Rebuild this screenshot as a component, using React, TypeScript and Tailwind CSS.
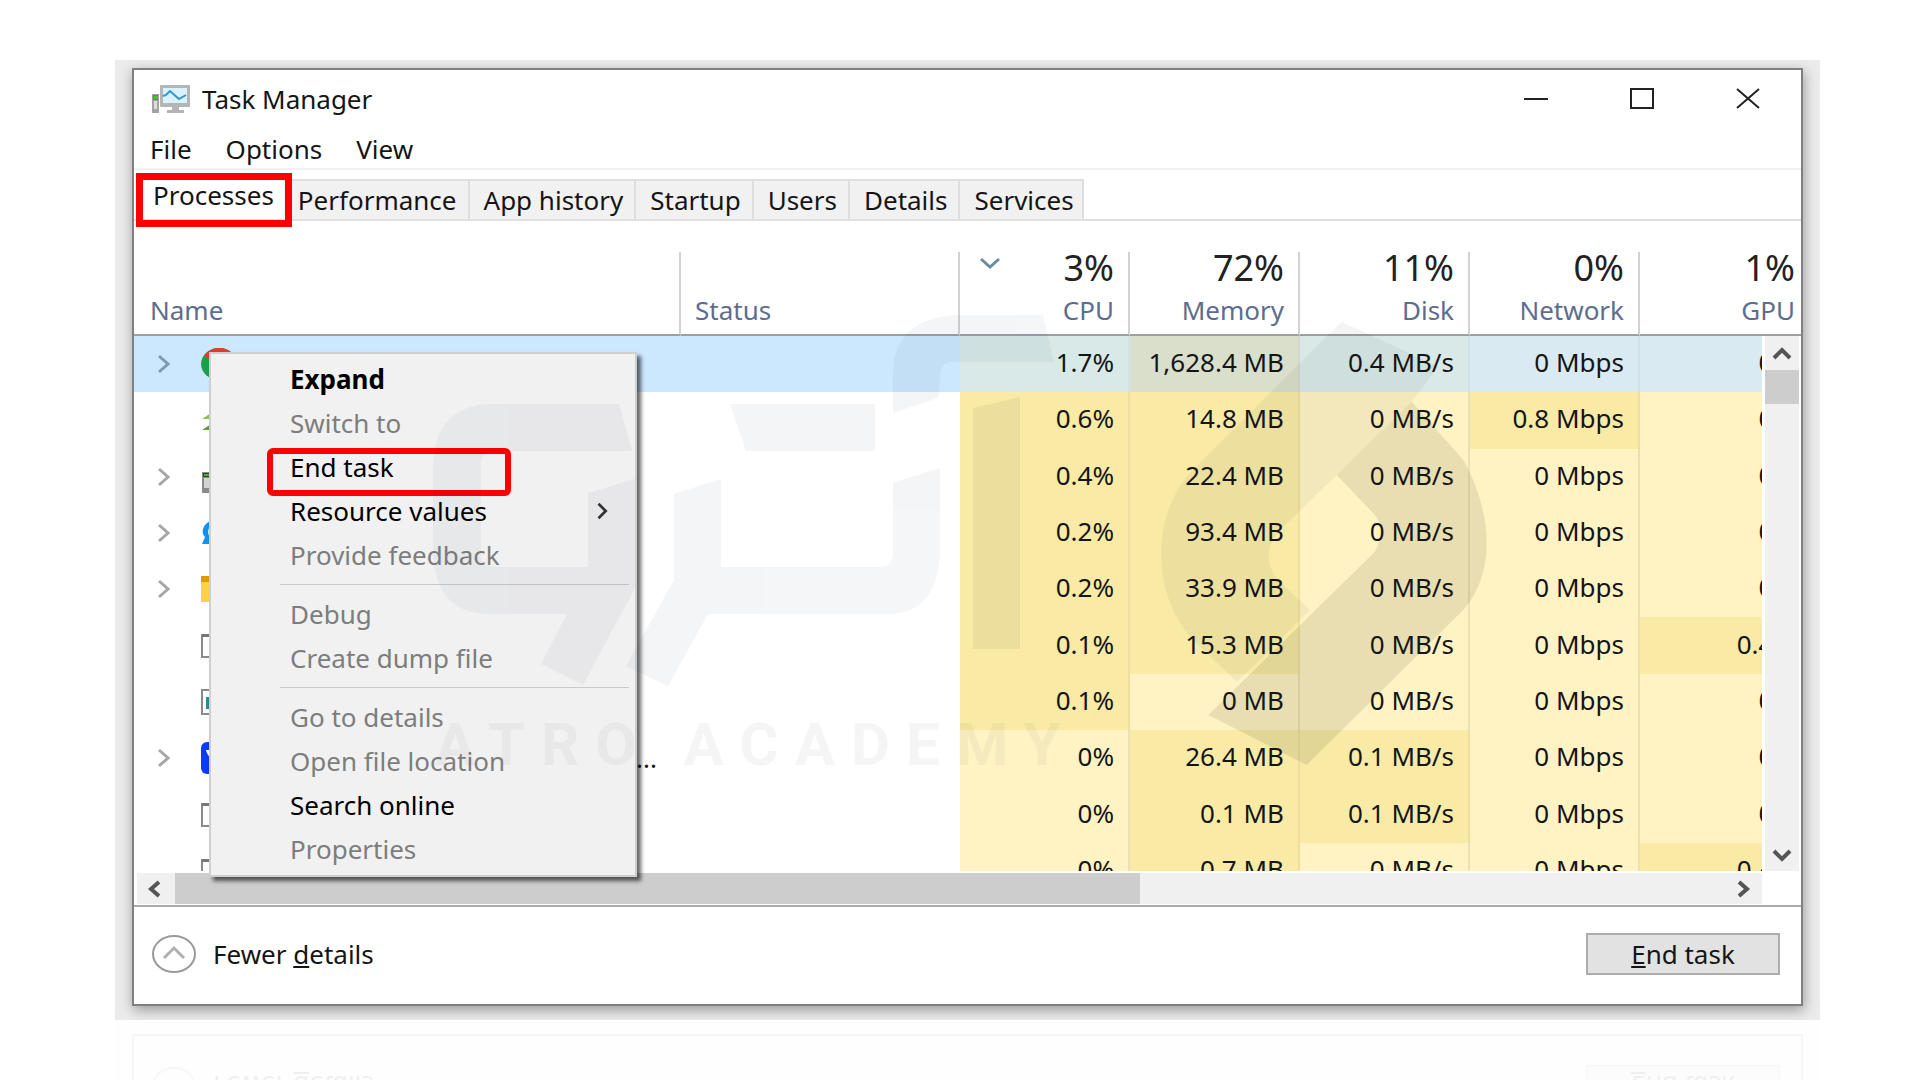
import React from 'react';
import clsx from 'clsx';

type Heat = 'low' | 'high';

interface ProcessRow {
  icon: IconName;
  expandable?: boolean;
  truncated?: boolean;
  values: [string, Heat][];
}

type IconName = 'chrome' | 'arrows' | 'tower' | 'swirl' | 'folder' | 'window' | 'app' | 'shield';

const TABS = ['Processes', 'Performance', 'App history', 'Startup', 'Users', 'Details', 'Services'];

const COLUMNS = [
  { label: 'CPU', usage: '3%', sorted: true },
  { label: 'Memory', usage: '72%' },
  { label: 'Disk', usage: '11%' },
  { label: 'Network', usage: '0%' },
  { label: 'GPU', usage: '1%' },
];

const ROWS: ProcessRow[] = [
  { icon: 'chrome', expandable: true, values: [['1.7%', 'low'], ['1,628.4 MB', 'high'], ['0.4 MB/s', 'low'], ['0 Mbps', 'low'], ['0%', 'low']] },
  { icon: 'arrows', values: [['0.6%', 'high'], ['14.8 MB', 'high'], ['0 MB/s', 'low'], ['0.8 Mbps', 'high'], ['0%', 'low']] },
  { icon: 'tower', expandable: true, values: [['0.4%', 'high'], ['22.4 MB', 'high'], ['0 MB/s', 'low'], ['0 Mbps', 'low'], ['0%', 'low']] },
  { icon: 'swirl', expandable: true, values: [['0.2%', 'high'], ['93.4 MB', 'high'], ['0 MB/s', 'low'], ['0 Mbps', 'low'], ['0%', 'low']] },
  { icon: 'folder', expandable: true, values: [['0.2%', 'high'], ['33.9 MB', 'high'], ['0 MB/s', 'low'], ['0 Mbps', 'low'], ['0%', 'low']] },
  { icon: 'window', values: [['0.1%', 'high'], ['15.3 MB', 'high'], ['0 MB/s', 'low'], ['0 Mbps', 'low'], ['0.4%', 'high']] },
  { icon: 'app', values: [['0.1%', 'high'], ['0 MB', 'low'], ['0 MB/s', 'low'], ['0 Mbps', 'low'], ['0%', 'low']] },
  { icon: 'shield', expandable: true, truncated: true, values: [['0%', 'low'], ['26.4 MB', 'high'], ['0.1 MB/s', 'high'], ['0 Mbps', 'low'], ['0%', 'low']] },
  { icon: 'window', values: [['0%', 'low'], ['0.1 MB', 'high'], ['0.1 MB/s', 'high'], ['0 Mbps', 'low'], ['0%', 'low']] },
  { icon: 'window', values: [['0%', 'low'], ['0.7 MB', 'high'], ['0 MB/s', 'low'], ['0 Mbps', 'low'], ['0.4%', 'high']] },
];

const MENU_GROUPS = [
  [
    { label: 'Expand', primary: true },
    { label: 'Switch to', disabled: true },
    { label: 'End task', marked: true },
    { label: 'Resource values', submenu: true },
    { label: 'Provide feedback', disabled: true },
  ],
  [
    { label: 'Debug', disabled: true },
    { label: 'Create dump file', disabled: true },
  ],
  [
    { label: 'Go to details', disabled: true },
    { label: 'Open file location', disabled: true },
    { label: 'Search online' },
    { label: 'Properties', disabled: true },
  ],
] as { label: string; primary?: boolean; disabled?: boolean; marked?: boolean; submenu?: boolean }[][];

const Chevron: React.FC<{ points: string; className: string; stroke?: number }> = ({ points, className, stroke = 3 }) => (
  <svg viewBox="0 0 20 20" className={className} fill="none" stroke="currentColor" strokeWidth={stroke} aria-hidden="true">
    <polyline points={points} />
  </svg>
);

const ProcessIcon: React.FC<{ name: IconName }> = ({ name }) => (
  <svg viewBox="0 0 36 32" className="h-8 w-9 shrink-0" aria-hidden="true">
    {name === 'chrome' && (
      <>
        <ellipse cx="18" cy="16" rx="18" ry="16" fill="#1e9e49" />
        <path d="M3 8C10-3 28-3 34 9L18 12L7 10Z" fill="#e33b2e" />
        <circle cx="18" cy="16" r="7" fill="#4285f4" />
      </>
    )}
    {name === 'arrows' && (
      <>
        <path d="M1 15L13 7V15Z" fill="#8cc152" />
        <path d="M1 26L13 18V26Z" fill="#5f9e38" />
      </>
    )}
    {name === 'tower' && (
      <>
        <rect x="1" y="11" width="12" height="21" fill="#8b8b8b" />
        <rect x="2" y="12" width="9" height="4" fill="#3c3c3c" />
        <rect x="3" y="13" width="8" height="2" fill="#39c016" />
        <rect x="3" y="17" width="8" height="10" fill="#d3d3d3" />
      </>
    )}
    {name === 'swirl' && <path d="M14 3C2 4-1 16 4 20L1 27H14L11 22C5 18 6 9 14 7Z" fill="#1292ee" />}
    {name === 'folder' && (
      <>
        <rect x="0" y="3" width="30" height="26" fill="#ffd04a" />
        <rect x="0" y="3" width="14" height="6" fill="#dd9a0b" />
      </>
    )}
    {name === 'window' && (
      <>
        <rect x="1" y="5" width="30" height="22" fill="#fff" stroke="#8a8a8a" strokeWidth="2" />
        <rect x="1" y="4" width="30" height="3" fill="#777" />
      </>
    )}
    {name === 'app' && (
      <>
        <rect x="1" y="4" width="28" height="24" fill="#fff" stroke="#8a8a8a" strokeWidth="2" />
        <rect x="5" y="11" width="16" height="12" fill="#2a8b99" />
      </>
    )}
    {name === 'shield' && (
      <>
        <rect width="34" height="32" rx="6" fill="#0b3bff" />
        <path d="M5 8H14V18Q6 15 5 8Z" fill="#fff" />
      </>
    )}
  </svg>
);

const TaskManagerLogo: React.FC = () => (
  <svg viewBox="0 0 38 28" className="h-7 w-[38px]" aria-hidden="true">
    <rect x="0" y="9" width="7" height="19" fill="#a3a3a3" />
    <rect x="1" y="10" width="5" height="5" fill="#777" />
    <rect x="2" y="11" width="4" height="3" fill="#3ccb1c" />
    <rect x="2" y="16" width="3" height="8" fill="#ddd" />
    <rect x="8" y="0" width="30" height="22" rx="1" fill="#b5b5b5" />
    <rect x="11" y="3" width="24" height="15" fill="#d9f2fd" />
    <path d="M11 11L14 10L18 6L27 14L34 10" fill="none" stroke="#2f97d5" strokeWidth="2" />
    <path d="M20 22H27V25H32V28H15V25H20Z" fill="#b4b4b4" />
  </svg>
);

const TitleBar: React.FC = () => (
  <header className="flex h-[58px] items-center justify-between pl-[18px] pr-10">
    <div className="flex items-center gap-3">
      <TaskManagerLogo />
      <h1>Task Manager</h1>
    </div>
    <div className="flex items-center gap-20 text-[#222]">
      <button type="button" aria-label="Minimize">
        <svg viewBox="0 0 26 22" className="h-[22px] w-[26px]" stroke="currentColor" strokeWidth="2">
          <path d="M1 11H25" />
        </svg>
      </button>
      <button type="button" aria-label="Maximize">
        <svg viewBox="0 0 26 22" className="h-[22px] w-[26px]" fill="none" stroke="currentColor" strokeWidth="2">
          <rect x="2" y="1" width="22" height="19" />
        </svg>
      </button>
      <button type="button" aria-label="Close">
        <svg viewBox="0 0 26 22" className="h-[22px] w-[26px]" stroke="currentColor" strokeWidth="2">
          <path d="M2 1L24 20M24 1L2 20" />
        </svg>
      </button>
    </div>
  </header>
);

const Tabs: React.FC = () => (
  <div role="tablist" className="flex h-[51px] items-end border-b-2 border-[#e0e0e0] pl-0.5">
    {TABS.map((tab, i) =>
      i === 0 ? (
        <button key={tab} type="button" role="tab" aria-selected="true" className="relative h-10 bg-white pb-2 pl-[17px] pr-2.5">
          {tab}
          <span className="absolute -bottom-2 -right-2 -top-1.5 left-0 z-10 border-[7px] border-[#fe0000]" />
        </button>
      ) : (
        <button
          key={tab}
          type="button"
          role="tab"
          aria-selected="false"
          className="h-10 border-r-2 border-t-2 border-[#dedede] bg-[#f1f1f1] pl-3.5 pr-[11px] last:pr-2"
        >
          {tab}
        </button>
      ),
    )}
  </div>
);

const ProcessTable: React.FC = () => (
  <table className="h-[647px] w-full table-fixed border-separate border-spacing-0">
    <colgroup>
      <col />
      <col className="w-[279px]" />
      <col className="w-[170px]" />
      <col className="w-[170px]" />
      <col className="w-[170px]" />
      <col className="w-[170px]" />
      <col className="w-[161px]" />
    </colgroup>
    <thead>
      <tr className="h-[84px] align-bottom text-[#5d6d8e]">
        <th className="border-b-2 border-r-2 border-b-[#9b9fa6] border-r-[#d2d2d2] pb-2 pl-4 text-left font-normal leading-8">Name</th>
        <th className="border-b-2 border-r-2 border-b-[#9b9fa6] border-r-[#d2d2d2] pb-2 pl-3.5 text-left font-normal leading-8">Status</th>
        {COLUMNS.map((col) => (
          <th
            key={col.label}
            className="relative border-b-2 border-r-2 border-b-[#9b9fa6] border-r-[#d2d2d2] pb-2 pr-3.5 text-right font-normal last:border-r-0 last:pr-1.5"
          >
            {col.sorted && <Chevron points="1,5 10,13 19,5" className="absolute left-5 top-0.5 h-5 w-5 text-[#6d8ba0]" />}
            <div className="text-4xl leading-7 text-[#222]">{col.usage}</div>
            <div className="mt-3 leading-8">{col.label}</div>
          </th>
        ))}
      </tr>
    </thead>
    <tbody>
      {ROWS.map((row, i) => {
        const selected = i === 0;
        return (
          <tr key={i} className={clsx(selected && 'bg-[#cce8ff]')}>
            <td className="p-0 pl-5">
              <div className="flex items-center pr-6">
                <span className="flex w-[47px] shrink-0">
                  {row.expandable && (
                    <Chevron
                      points="5,2 14,10 5,18"
                      className={clsx('h-5 w-5', selected ? 'text-[#7f98ad]' : 'text-[#a6a6a6]')}
                    />
                  )}
                </span>
                <ProcessIcon name={row.icon} />
                {row.truncated && <span className="ml-auto leading-8">...</span>}
              </div>
            </td>
            <td className="p-0" />
            {row.values.map(([value, heat], c) => (
              <td
                key={c}
                className={clsx(
                  'border-r-2 p-0 pb-1 pr-3.5 text-right leading-8 last:border-r-0 last:pr-1.5',
                  selected && (heat === 'high' ? 'border-[#d3dacd] bg-[#d9dfcb]' : c < 3 ? 'border-[#d0e2e8] bg-[#d8e9e8]' : 'border-[#cfe2ec] bg-[#d9eaf2]'),
                  !selected && (heat === 'high' ? 'border-[#efdf9f] bg-[#f9eaa6]' : 'border-[#ebdfb4] bg-[#fff3c4]'),
                )}
              >
                {value}
              </td>
            ))}
          </tr>
        );
      })}
    </tbody>
  </table>
);

const VerticalScrollbar: React.FC = () => (
  <div className="absolute bottom-0 right-0 top-[115px] flex w-[39px] flex-col items-center border-l-[3px] border-r-2 border-white bg-[#f0f0f0] text-[#555]">
    <button type="button" aria-label="Scroll up" className="flex h-[34px] items-center justify-center">
      <Chevron points="2,15 10,7 18,15" className="h-5 w-5" stroke={4} />
    </button>
    <div className="h-[34px] w-full bg-[#cdcdcd]" />
    <button type="button" aria-label="Scroll down" className="mt-auto flex h-8 items-center justify-center">
      <Chevron points="2,6 10,14 18,6" className="h-5 w-5" stroke={4} />
    </button>
  </div>
);

const HorizontalScrollbar: React.FC = () => (
  <div className="mb-px ml-[3px] mr-[39px] mt-0.5 flex h-[31px] items-center bg-[#f0f0f0] text-[#555]">
    <button type="button" aria-label="Scroll left" className="flex w-[38px] justify-center">
      <Chevron points="13,3 5,10 13,17" className="h-5 w-5" stroke={4} />
    </button>
    <div className="h-full w-[59.4%] bg-[#cdcdcd]" />
    <button type="button" aria-label="Scroll right" className="ml-auto flex w-[38px] justify-center">
      <Chevron points="6,3 14,10 6,17" className="h-5 w-5" stroke={4} />
    </button>
  </div>
);

const Footer: React.FC = () => (
  <footer className="flex h-[97px] items-center justify-between pb-1 pl-[17px] pr-[21px]">
    <button type="button" className="flex items-center gap-4">
      <svg viewBox="0 0 46 40" className="h-10 w-[46px]" fill="none" aria-hidden="true">
        <ellipse cx="23" cy="20" rx="21" ry="18" stroke="#9a9a9a" strokeWidth="2" />
        <path d="M13 24L23 14L33 24" stroke="#b0b0b0" strokeWidth="3" />
      </svg>
      <span>
        Fewer <span className="underline">d</span>etails
      </span>
    </button>
    <button type="button" className="h-[42px] w-[194px] border-2 border-[#adadad] bg-[#e2e2e2] leading-8">
      <span className="underline">E</span>nd task
    </button>
  </footer>
);

const ContextMenu: React.FC = () => (
  <div
    role="menu"
    className="absolute left-[75px] top-[282px] w-[428px] border-2 border-[#cfcfcf] bg-[#f1f1f1] pb-1 pt-[3px] shadow-[4px_4px_4px_rgba(0,0,0,0.6)]"
  >
    {MENU_GROUPS.map((group, g) => (
      <div key={g}>
        {g > 0 && <div role="separator" className="my-[7px] ml-[69px] mr-1.5 border-t border-[#c9c9c9]" />}
        {group.map((item) => (
          <button
            key={item.label}
            type="button"
            role="menuitem"
            disabled={item.disabled}
            className={clsx(
              'relative flex h-11 w-full items-center justify-between pl-[79px] pr-[22px] text-left',
              item.primary && 'font-bold',
              item.disabled ? 'text-[#7d7d7d]' : 'text-black',
            )}
          >
            {item.label}
            {item.submenu && <Chevron points="5,2 13,10 5,18" className="h-[18px] w-5 text-[#333]" />}
            {item.marked && <span className="absolute left-14 top-[3px] h-12 w-[244px] rounded-md border-[6px] border-[#fe0000]" />}
          </button>
        ))}
      </div>
    ))}
  </div>
);

const Watermark: React.FC = () => (
  <svg
    viewBox="430 310 1060 460"
    className="pointer-events-none absolute left-[296px] top-[240px] h-[460px] w-[1060px]"
    fill="#1c3050"
    aria-hidden="true"
  >
    <g opacity="0.045">
      <path d="M619 404H490Q433 406 433 470V548Q433 614 490 614H567L541 664L583 685L635 588V479L588 493V567H495Q481 567 481 553V465Q481 451 495 451H632Z" />
      <path d="M674 494L721 479V567H880Q893 567 893 553V483L940 468V555Q936 614 888 614H708L668 686L626 666L674 580Z" />
      <path d="M730 404H875V451H746Z" />
      <path d="M1043 315H956Q893 319 893 375V413L938 398Q940 395 940 378Q940 362 952 362H1054Z" />
    </g>
    <path d="M973 408L1020 397V649H973Z" fill="#1b2410" opacity="0.06" />
    <g transform="translate(1050 300) scale(0.3333)" fill="#1b2410">
      <path
        d="M875 65L450 490C300 620 300 870 420 1010L560 1145L620 1090L780 930L690 845C645 800 645 740 690 690L860 525L1085 305L1165 200Z"
        opacity="0.05"
      />
      <path d="M1085 305L860 525L975 645Q1010 690 975 755L475 1245L770 1395L1230 940C1340 830 1330 640 1240 480Z" opacity="0.1" />
    </g>
    <text x="435" y="765" className="font-['Roboto',sans-serif] text-6xl font-bold tracking-[16px]" fill="#222" opacity="0.04">
      ATRO ACADEMY
    </text>
  </svg>
);

export default function App() {
  return (
    <main className="h-screen overflow-hidden bg-white pl-[115px] pr-[100px] pt-[60px] font-['Noto_Sans','Open_Sans',sans-serif] text-[26px] leading-8 text-[#151515]">
      <div className="overflow-hidden bg-[#ebebeb] px-[17px] pb-3.5 pt-2">
        <section className="relative border-2 border-[#808080] bg-white shadow-[1px_4px_12px_rgba(0,0,0,0.35)]">
          <TitleBar />
          <nav className="flex h-[42px] items-center gap-[34px] border-b-2 border-[#f1f0f0] pl-4 pt-0.5">
            <button type="button">File</button>
            <button type="button">Options</button>
            <button type="button">View</button>
          </nav>
          <Tabs />
          <div className="relative h-[650px] overflow-hidden pt-[31px]">
            <ProcessTable />
            <VerticalScrollbar />
          </div>
          <HorizontalScrollbar />
          <div className="border-t-2 border-[#ababab]">
            <Footer />
          </div>
          <ContextMenu />
          <Watermark />
        </section>
      </div>
      {/* faint mirror image under the window */}
      <div className="bg-[#fefefe] px-[17px] pt-3.5" aria-hidden="true" inert>
        <div className="-scale-y-100 border-2 border-t-0 border-[#808080] opacity-[0.06]">
          <Footer />
        </div>
      </div>
    </main>
  );
}
